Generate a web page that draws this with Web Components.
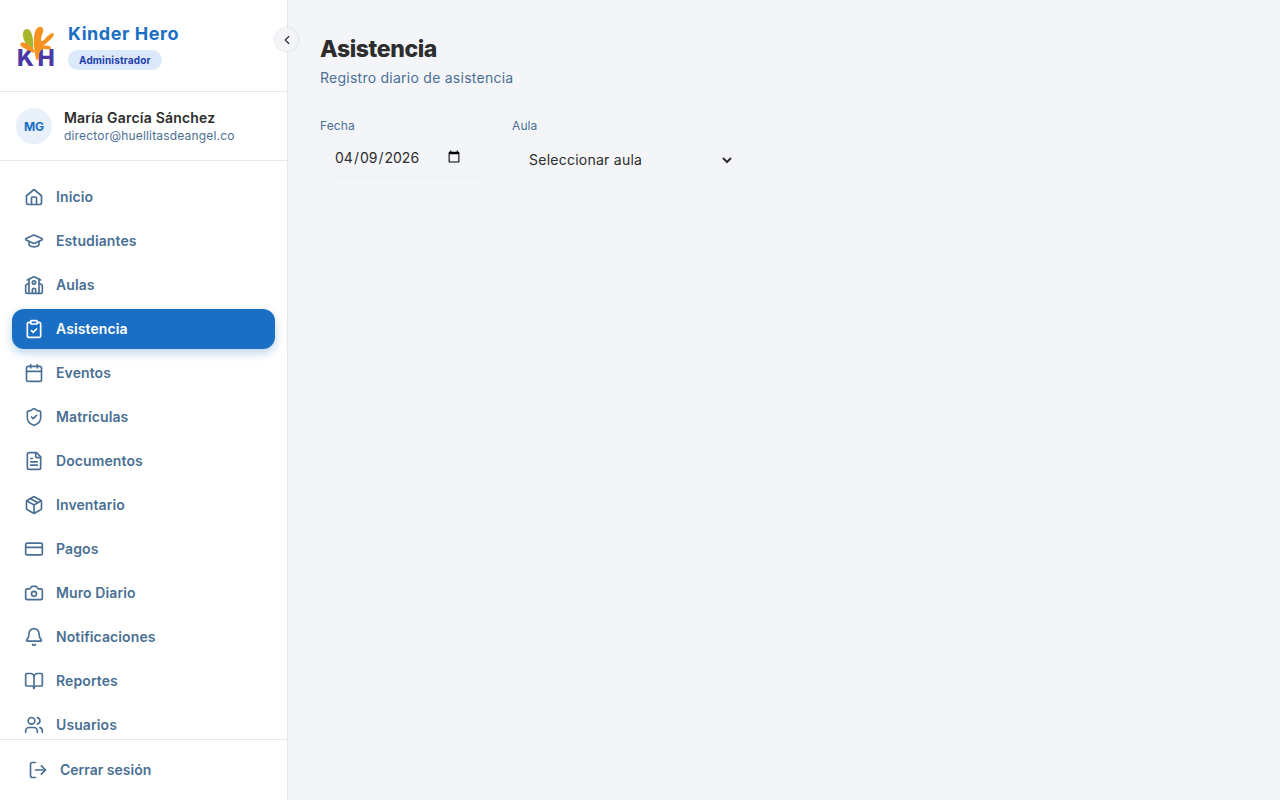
<!DOCTYPE html>
<html lang="es">
<head>
<meta charset="utf-8">
<title>Asistencia</title>
<style>
html, body { margin: 0; height: 100%; }
body { font-family: "Inter", "Noto Sans", sans-serif; background: #f3f5f8; overflow: hidden; }
</style>
</head>
<body>
<app-shell>
    <side-bar slot="side">
        <nav-item icon="home">Inicio</nav-item>
        <nav-item icon="grad">Estudiantes</nav-item>
        <nav-item icon="school">Aulas</nav-item>
        <nav-item icon="clip" active>Asistencia</nav-item>
        <nav-item icon="calendar">Eventos</nav-item>
        <nav-item icon="shield">Matrículas</nav-item>
        <nav-item icon="file">Documentos</nav-item>
        <nav-item icon="box">Inventario</nav-item>
        <nav-item icon="card">Pagos</nav-item>
        <nav-item icon="camera">Muro Diario</nav-item>
        <nav-item icon="bell">Notificaciones</nav-item>
        <nav-item icon="book">Reportes</nav-item>
        <nav-item icon="users">Usuarios</nav-item>
    </side-bar>
    <attendance-page></attendance-page>
</app-shell>

<script>
const icons = {
    home: '<path d="M3 10.5 12 3l9 7.5V19a2 2 0 0 1-2 2H5a2 2 0 0 1-2-2z"/><path d="M9 21v-8a1 1 0 0 1 1-1h4a1 1 0 0 1 1 1v8"/>',
    grad: '<path d="M21.4 10.9a1 1 0 0 0 0-1.8L12.8 5.2a2 2 0 0 0-1.6 0L2.6 9.1a1 1 0 0 0 0 1.8l8.6 3.9a2 2 0 0 0 1.6 0z"/><path d="M6 12.5V16c0 1.7 2.7 3 6 3s6-1.3 6-3v-3.5"/>',
    school: '<path d="M14 22v-4a2 2 0 1 0-4 0v4"/><path d="m18 10 3.4 1.7a1 1 0 0 1 .6.9V20a2 2 0 0 1-2 2H4a2 2 0 0 1-2-2v-7.4a1 1 0 0 1 .6-.9L6 10"/><path d="M18 5v17"/><path d="m4 6 7.1-3.6a2 2 0 0 1 1.8 0L20 6"/><path d="M6 5v17"/><circle cx="12" cy="9" r="2"/>',
    clip: '<rect x="8" y="2" width="8" height="4" rx="1"/><path d="M16 4h2a2 2 0 0 1 2 2v14a2 2 0 0 1-2 2H6a2 2 0 0 1-2-2V6a2 2 0 0 1 2-2h2"/><path d="m9 14 2 2 4-4"/>',
    calendar: '<path d="M8 2v4M16 2v4"/><rect x="3" y="4" width="18" height="18" rx="2"/><path d="M3 10h18"/>',
    shield: '<path d="M20 13c0 5-3.5 7.5-7.7 9a1 1 0 0 1-.6 0C7.500 20.500 4 18 4 13V6a1 1 0 0 1 1-1c2 0 4.500-1.200 6.200-2.700a1.200 1.200 0 0 1 1.600 0C14.500 3.800 17 5 19 5a1 1 0 0 1 1 1z"/><path d="m9 12 2 2 4-4"/>',
    file: '<path d="M15 2H6a2 2 0 0 0-2 2v16a2 2 0 0 0 2 2h12a2 2 0 0 0 2-2V7z"/><path d="M14 2v4a2 2 0 0 0 2 2h4"/><path d="M10 9H8M16 13H8M16 17H8"/>',
    box: '<path d="M11 21.700a2 2 0 0 0 2 0l7-4A2 2 0 0 0 21 16V8a2 2 0 0 0-1-1.700l-7-4a2 2 0 0 0-2 0l-7 4A2 2 0 0 0 3 8v8a2 2 0 0 0 1 1.700z"/><path d="M12 22V12M3.300 7 12 12l8.700-5M7.500 4.300l9 5.100"/>',
    card: '<rect x="2" y="5" width="20" height="14" rx="2"/><path d="M2 10h20"/>',
    camera: '<path d="M14.500 4h-5L7 7H4a2 2 0 0 0-2 2v9a2 2 0 0 0 2 2h16a2 2 0 0 0 2-2V9a2 2 0 0 0-2-2h-3z"/><circle cx="12" cy="13" r="3"/>',
    bell: '<path d="M10.300 21a2 2 0 0 0 3.400 0"/><path d="M3.300 15.300A1 1 0 0 0 4 17h16a1 1 0 0 0 .7-1.700C19.400 14 18 12.500 18 8A6 6 0 0 0 6 8c0 4.500-1.400 6-2.700 7.300"/>',
    book: '<path d="M12 7v14"/><path d="M3 18a1 1 0 0 1-1-1V4a1 1 0 0 1 1-1h5a4 4 0 0 1 4 4 4 4 0 0 1 4-4h5a1 1 0 0 1 1 1v13a1 1 0 0 1-1 1h-6a3 3 0 0 0-3 3 3 3 0 0 0-3-3z"/>',
    users: '<path d="M16 21v-2a4 4 0 0 0-4-4H6a4 4 0 0 0-4 4v2"/><circle cx="9" cy="7" r="4"/><path d="M22 21v-2a4 4 0 0 0-3-3.900"/><path d="M16 3.100a4 4 0 0 1 0 7.800"/>',
    logout: '<path d="M9 21H5a2 2 0 0 1-2-2V5a2 2 0 0 1 2-2h4"/><path d="m16 17 5-5-5-5"/><path d="M21 12H9"/>'
};

const svgIcon = (name) => `<svg viewBox="0 0 24 24" width="20" height="20" fill="none" stroke="currentColor" stroke-width="2" stroke-linecap="round" stroke-linejoin="round">${icons[name]}</svg>`;

class AppShell extends HTMLElement {
    constructor() {
        super();
        this.attachShadow({ mode: 'open' });
        this.shadowRoot.innerHTML = `
            <style>
                :host { display: flex; height: 800px; width: 1280px; overflow: hidden; }
                main { flex: 1; min-width: 0; }
            </style>
            <slot name="side"></slot>
            <main><slot></slot></main>
        `;
    }
}

class SideBar extends HTMLElement {
    constructor() {
        super();
        this.attachShadow({ mode: 'open' });
        this.shadowRoot.innerHTML = `
            <style>
                :host {
                    display: flex;
                    flex-direction: column;
                    position: relative;
                    flex: none;
                    box-sizing: border-box;
                    width: 288px;
                    height: 800px;
                    background: #fff;
                    border-right: 1px solid #e5e7eb;
                    color: #4a6f94;
                }
                .brand {
                    display: flex;
                    align-items: center;
                    gap: 12px;
                    box-sizing: border-box;
                    height: 92px;
                    padding: 0 16px;
                    border-bottom: 1px solid #e5e7eb;
                }
                .logo { flex: none; margin: 3px 0 -3px; }
                .brand h1 { margin: 0; font-size: 18px; line-height: 25px; font-weight: 700; color: #1a6fc4; letter-spacing: .55px; }
                .badge {
                    display: inline-block;
                    margin-top: 4px;
                    padding: 0 11px;
                    height: 20px;
                    line-height: 20px;
                    border-radius: 10px;
                    background: #dbe9fb;
                    color: #1e40af;
                    font-size: 10px;
                    font-weight: 700;
                    letter-spacing: .15px;
                }
                .toggle {
                    position: absolute;
                    top: 28px;
                    right: -11px;
                    width: 23px;
                    height: 23px;
                    border-radius: 50%;
                    background: #f3f5f8;
                    box-shadow: 0 0 3px rgba(0,0,0,.16);
                    display: flex;
                    align-items: center;
                    justify-content: center;
                    color: #2d2d2d;
                    z-index: 2;
                }
                .user {
                    display: flex;
                    align-items: center;
                    gap: 12px;
                    box-sizing: border-box;
                    height: 69px;
                    padding: 0 16px;
                    border-bottom: 1px solid #e5e7eb;
                }
                .avatar {
                    width: 36px;
                    height: 36px;
                    border-radius: 50%;
                    background: #e8f0fa;
                    color: #1a6fc4;
                    font-size: 12px;
                    font-weight: 700;
                    display: flex;
                    align-items: center;
                    justify-content: center;
                }
                .name { font-size: 14px; line-height: 19px; font-weight: 600; color: #2d2d2d; letter-spacing: .2px; }
                .mail { font-size: 12px; line-height: 17px; color: #4a6f94; letter-spacing: .18px; }
                nav {
                    flex: 1;
                    min-height: 0;
                    overflow: hidden;
                    display: flex;
                    flex-direction: column;
                    gap: 4px;
                    padding: 16px 12px;
                }
                .foot {
                    box-sizing: border-box;
                    height: 61px;
                    border-top: 1px solid #e5e7eb;
                    display: flex;
                    align-items: center;
                    gap: 12px;
                    padding: 0 28px;
                    font-size: 14px;
                    font-weight: 600;
                }
                .foot span { margin-top: -2px; }
            </style>
            <div class="brand">
                <svg class="logo" width="40" height="50" viewBox="0 0 40 50">
                    <text x="1" y="42" font-family="Inter, sans-serif" font-size="23" font-weight="800" fill="#4b3aa5">K</text>
                    <text x="21.500" y="42" font-family="Inter, sans-serif" font-size="23" font-weight="800" fill="#4b3aa5">H</text>
                    <path d="M17 26C11 23 6 15 7 9c1-5 6-5 8-1 2 5 3 12 2 18z" fill="#a9b52a"/>
                    <path d="M20 35C18 26 17 14 19 8c1-5 7-7 8-3 1 3-2 7-2 11 0 2 2 1 4-1 2-3 6-6 8-6 2 1 0 4-2 6-3 3-6 5-8 7 4-1 8 0 8 2s-4 1-7 1-5 3-5 8c0 3-2 4-3 2z" fill="#f7921e"/>
                    <path d="M5 19c4-2 10 3 14 8l-2 2c-4-3-9-4-12-7-1-1-1-2 0-3z" fill="#f7921e"/>
                </svg>
                <div>
                    <h1>Kinder Hero</h1>
                    <span class="badge">Administrador</span>
                </div>
            </div>
            <div class="toggle"><svg viewBox="0 0 24 24" width="14" height="14" fill="none" stroke="currentColor" stroke-width="2" stroke-linecap="round" stroke-linejoin="round"><path d="m15 18-6-6 6-6"/></svg></div>
            <div class="user">
                <div class="avatar">MG</div>
                <div>
                    <div class="name">María García Sánchez</div>
                    <div class="mail">director@huellitasdeangel.co</div>
                </div>
            </div>
            <nav><slot></slot></nav>
            <div class="foot">${svgIcon('logout')}<span>Cerrar sesión</span></div>
        `;
    }
}

class NavItem extends HTMLElement {
    constructor() {
        super();
        this.attachShadow({ mode: 'open' });
    }

    connectedCallback() {
        this.shadowRoot.innerHTML = `
            <style>
                :host {
                    display: flex;
                    flex: none;
                    align-items: center;
                    gap: 12px;
                    height: 40px;
                    padding: 0 12px;
                    border-radius: 12px;
                    font-size: 14px;
                    font-weight: 600;
                    letter-spacing: .1px;
                    color: #4a6f94;
                }
                :host([active]) {
                    background: #1a6fc4;
                    color: #fff;
                    box-shadow: 0 4px 10px rgba(26,111,196,.3);
                }
                svg { flex: none; }
                span { margin-top: -2px; }
            </style>
            ${svgIcon(this.getAttribute('icon'))}
            <span><slot></slot></span>
        `;
    }
}

class AttendancePage extends HTMLElement {
    constructor() {
        super();
        this.attachShadow({ mode: 'open' });
        this.shadowRoot.innerHTML = `
            <style>
                :host { display: block; padding: 32px; }
                h2 { margin: 0; padding-top: 1px; font-size: 23px; line-height: 33px; font-weight: 800; letter-spacing: -.4px; color: #2d2d2d; }
                p { margin: 0; font-size: 14px; line-height: 24px; color: #4a6f94; letter-spacing: .25px; }
                .filters { display: flex; gap: 16px; margin-top: 28px; align-items: flex-start; }
                label { display: block; font-size: 12px; line-height: 16px; color: #4a6f94; margin-bottom: 6px; letter-spacing: .1px; }
                input, select {
                    font: 400 14px "Inter", sans-serif;
                    color: #2d2d2d;
                    border: 0;
                    outline: 0;
                    background: #f3f5f8;
                    box-sizing: border-box;
                }
                input { display: block; width: 176px; height: 36px; padding: 0 33px 2px 14px; border-radius: 12px; box-shadow: 0 1px 1px rgba(0,0,0,.02); }
                select { display: block; width: 223px; height: 40px; padding: 0 13px 2px; letter-spacing: .25px; }
            </style>
            <h2>Asistencia</h2>
            <p>Registro diario de asistencia</p>
            <div class="filters">
                <div><label for="fecha">Fecha</label><input id="fecha" type="date" value="2026-04-09"></div>
                <div><label for="aula">Aula</label><select id="aula"><option>Seleccionar aula</option></select></div>
            </div>
        `;
    }
}

customElements.define('app-shell', AppShell);
customElements.define('side-bar', SideBar);
customElements.define('nav-item', NavItem);
customElements.define('attendance-page', AttendancePage);
</script>
</body>
</html>
